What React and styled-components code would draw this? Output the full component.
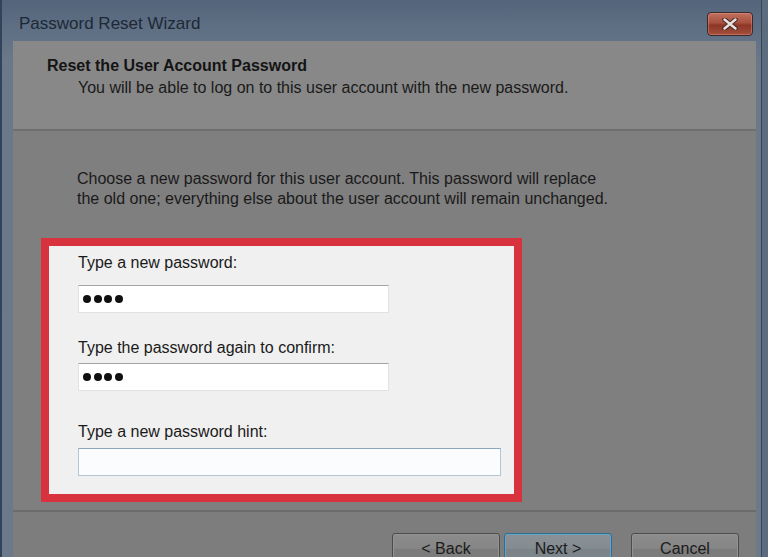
import React from 'react';
import styled, { createGlobalStyle } from 'styled-components';

const GlobalStyle = createGlobalStyle`
    html, body {
        margin: 0;
        padding: 0;
        background: #56667a;
    }
    body {
        font-family: "Liberation Sans", Arial, sans-serif;
    }
`;

const Window = styled.div`
    width: 768px;
    height: 557px;
    overflow: hidden;
    display: flex;
    flex-direction: column;
    box-sizing: border-box;
    padding: 0 12px 0 13px;
    background: linear-gradient(to bottom, #54647a 0px, #5f6f84 30px, #6a7889 60px, #6b798a 100%);
    box-shadow: inset 2px 0 0 #33445a, inset -6px 0 0 #5c6c7f, inset -7px 0 0 #35465b;
`;

const TitleBar = styled.div`
    height: 41px;
    flex: none;
    display: flex;
    align-items: flex-start;
    justify-content: space-between;
`;

const Title = styled.div`
    margin: 14px 0 0 6px;
    font-size: 17px;
    line-height: 20px;
    color: #1d2936;
`;

const CloseButton = styled.div`
    margin: 12px 3px 0 0;
    width: 46px;
    height: 24px;
    box-sizing: border-box;
    border: 1px solid #3a2a2b;
    border-radius: 4px;
    background: linear-gradient(to bottom, #c0705f 0%, #a8503e 45%, #8d3527 55%, #a4503c 100%);
    box-shadow: inset 0 0 0 1px rgba(240, 170, 150, 0.35);
    display: flex;
    align-items: center;
    justify-content: center;
`;

const Panel = styled.div`
    flex: 1;
    display: flex;
    flex-direction: column;
    background: #7f7f7f;
`;

const Header = styled.div`
    height: 90px;
    flex: none;
    box-sizing: border-box;
    padding: 15px 0 0 34px;
    background: #888888;
    border-bottom: 2px solid #6e6e6e;
`;

const HeaderTitle = styled.div`
    font-size: 16px;
    line-height: 19px;
    font-weight: bold;
    color: #141414;
`;

const HeaderSub = styled.div`
    margin: 3px 0 0 31px;
    font-size: 16px;
    line-height: 19px;
    color: #1a1a1a;
`;

const Body = styled.div`
    flex: none;
    padding: 38px 0 8px 28px;
`;

const Description = styled.p`
    margin: 0 0 0 36px;
    font-size: 16px;
    line-height: 20px;
    color: #1a1a1a;
`;

const Highlight = styled.div`
    margin-top: 29px;
    width: 481px;
    box-sizing: border-box;
    border: 8px solid #d8323f;
    background: #f0f0f0;
    padding: 7px 0 18px 29px;
`;

const Label = styled.div`
    margin-top: ${p => p.$top}px;
    margin-bottom: ${p => p.$gap}px;
    font-size: 16px;
    line-height: 20px;
    color: #1a1a1a;
`;

const TextBox = styled.div`
    width: ${p => p.$width}px;
    height: 28px;
    box-sizing: border-box;
    border: 1px solid ${p => (p.$focus ? '#b3c6d6' : '#e2e2e2')};
    border-top-color: ${p => (p.$focus ? '#8fa7bc' : '#a4a4a4')};
    background: ${p => (p.$focus ? '#fbfcfd' : '#ffffff')};
    display: flex;
    align-items: center;
    padding-left: 4px;
`;

const Mask = styled.div`
    display: flex;
    gap: 2.5px;
`;

const Dot = styled.span`
    width: 8px;
    height: 8px;
    border-radius: 50%;
    background: #101010;
`;

const Footer = styled.div`
    flex: 1;
    border-top: 2px solid #6b6b6b;
    padding: 21px 17px 0 0;
    display: flex;
    align-items: flex-start;
    justify-content: flex-end;
    background: #7d7d7d;
`;

const Button = styled.div`
    width: 108px;
    height: 32px;
    box-sizing: border-box;
    margin-left: ${p => p.$space}px;
    border: 1px solid ${p => (p.$primary ? '#2f6e94' : '#4b4b4b')};
    border-radius: 3px;
    background: ${p =>
        p.$primary
            ? 'linear-gradient(to bottom, #8a9197 0%, #838b91 50%, #7a8388 51%, #7f878c 100%)'
            : 'linear-gradient(to bottom, #8c8c8c 0%, #858585 50%, #7b7b7b 51%, #7e7e7e 100%)'};
    box-shadow: ${p => (p.$primary ? 'inset 0 0 0 1px #6aa3c2' : 'inset 0 0 0 1px #939393')};
    font-size: 16px;
    line-height: 30px;
    text-align: center;
    color: #1b1b1b;
`;

const PasswordMask = () => (
    <Mask>
        <Dot />
        <Dot />
        <Dot />
        <Dot />
    </Mask>
);

const App = () => {
    return (
        <Window>
            <GlobalStyle />
            <TitleBar>
                <Title>Password Reset Wizard</Title>
                <CloseButton>
                    <svg width="16" height="12" viewBox="0 0 16 12">
                        <path d="M2.5 1.5 L13.5 10.5 M13.5 1.5 L2.5 10.5" stroke="#4a2a26" strokeWidth="4.5" strokeLinecap="round" />
                        <path d="M2.5 1.5 L13.5 10.5 M13.5 1.5 L2.5 10.5" stroke="#e8e2e0" strokeWidth="2.4" strokeLinecap="round" />
                    </svg>
                </CloseButton>
            </TitleBar>
            <Panel>
                <Header>
                    <HeaderTitle>Reset the User Account Password</HeaderTitle>
                    <HeaderSub>You will be able to log on to this user account with the new password.</HeaderSub>
                </Header>
                <Body>
                    <Description>
                        Choose a new password for this user account. This password will replace
                        <br />
                        the old one; everything else about the user account will remain unchanged.
                    </Description>
                    <Highlight>
                        <Label $top={0} $gap={12}>Type a new password:</Label>
                        <TextBox $width={311}>
                            <PasswordMask />
                        </TextBox>
                        <Label $top={25} $gap={5}>Type the password again to confirm:</Label>
                        <TextBox $width={311}>
                            <PasswordMask />
                        </TextBox>
                        <Label $top={31} $gap={6}>Type a new password hint:</Label>
                        <TextBox $width={423} $focus />
                    </Highlight>
                </Body>
                <Footer>
                    <Button $space={0}>&lt; Back</Button>
                    <Button $space={4} $primary>Next &gt;</Button>
                    <Button $space={19}>Cancel</Button>
                </Footer>
            </Panel>
        </Window>
    );
};

export default App;
